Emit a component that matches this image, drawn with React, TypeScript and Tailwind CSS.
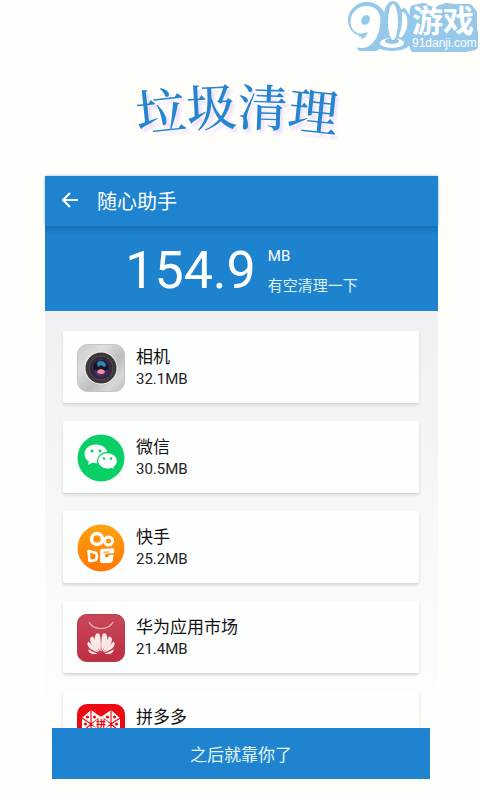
import type { ReactNode } from "react";

function BrandLogo() {
  return (
    <svg
      className="h-14 w-[136px]"
      viewBox="344 0 136 56"
      role="img"
      aria-label="91游戏 91danji.com"
    >
      <g fill="#96c8ea" stroke="#96c8ea" strokeWidth="8" strokeLinejoin="round">
        <path d="M414 9l10-2 4 3h10l8-3 8 1h15l4 5v16l1 4v13l-9 2h-51l-3-10z" />
        <ellipse cx="367" cy="20" rx="15" ry="14" />
        <path d="M370 30h12l-6 17h-15z" />
        <ellipse cx="393" cy="24" rx="6" ry="19" />
        <ellipse cx="392" cy="42" rx="14" ry="5" />
        <path d="M401 10q11 12 4 29" />
      </g>
      <text
        x="348"
        y="46"
        fill="#fff"
        stroke="#fff"
        strokeWidth="3"
        className="font-['Liberation_Sans',sans-serif] text-[56px] font-bold italic"
      >
        9
      </text>
      <ellipse cx="392" cy="43" rx="12" ry="5" fill="#fff" />
      <ellipse cx="392" cy="41" rx="7" ry="3" fill="#96c8ea" />
      <ellipse cx="393" cy="22" rx="6" ry="19" fill="#fff" stroke="#96c8ea" strokeWidth="2" />
      <path d="M402 12q3 0 5 5 2 12-5 20-3 2-3-2 4-8 3-23z" fill="#fff" />
      <text
        x="412"
        y="32"
        fill="#fff"
        className="font-['Noto_Sans_CJK_SC',sans-serif] text-[31px] font-bold"
      >
        游戏
      </text>
      <text
        x="412"
        y="47"
        fill="#fff"
        className="font-['Liberation_Sans',sans-serif] text-[12px]"
      >
        91danji.com
      </text>
    </svg>
  );
}

function CameraIcon() {
  return (
    <svg viewBox="0 0 48 48" className="size-12" aria-hidden="true">
      <defs>
        <linearGradient id="metal" x1="0" y1="0" x2="1" y2="1">
          <stop offset="0" stopColor="#c9c9c9" />
          <stop offset=".3" stopColor="#dedede" />
          <stop offset=".6" stopColor="#bdbdbd" />
          <stop offset=".8" stopColor="#d8d8d8" />
          <stop offset="1" stopColor="#bcbcbc" />
        </linearGradient>
        <radialGradient id="lens">
          <stop offset="0" stopColor="#17182c" />
          <stop offset=".6" stopColor="#251b33" />
          <stop offset="1" stopColor="#3a3439" />
        </radialGradient>
      </defs>
      <rect x=".5" y=".5" width="47" height="47" rx="10" fill="url(#metal)" stroke="#c4c4c4" />
      <circle cx="24" cy="24" r="16.500" fill="#eee" />
      <circle cx="24" cy="24" r="15.500" fill="#3b3639" />
      <circle cx="24" cy="24" r="12" fill="url(#lens)" stroke="#54465a" />
      <circle cx="24" cy="24" r="8.500" fill="#161427" stroke="#4b2f62" />
      <path d="M20 20q1-4 5-3 4 1 4 5l-2 1-3-2-3 2z" fill="#2d86ae" />
      <path d="M17 26l4 1 3-1 4 1 3-2q-1 7-7 7t-7-6z" fill="#4e2a78" />
      <path d="M21 26l3-1 3 1 1 2-2 2h-4l-2-2z" fill="#ee8c98" />
    </svg>
  );
}

function WeChatIcon() {
  return (
    <svg viewBox="0 0 48 48" className="size-12" aria-hidden="true">
      <circle cx="24" cy="24" r="23.500" fill="#09d066" />
      <path
        d="M19 10.500C12.500 10.500 7.500 14.500 7.500 20c0 3.200 1.700 5.900 4.400 7.600L11 31l4.200-2.200c1.200.3 2.500.5 3.800.5 6.500 0 11.500-4 11.500-9.300s-5-9.500-11.500-9.500z"
        fill="#fff"
      />
      <path
        d="M30.500 18.500c5.500 0 10 3.600 10 8.300 0 2.600-1.400 4.900-3.600 6.400l.8 3-3.500-1.700c-1.200.4-2.400.6-3.700.6-5.500 0-10-3.700-10-8.300s4.500-8.300 10-8.300z"
        fill="#fff"
        stroke="#09d066"
        strokeWidth="1.300"
      />
      <g fill="#09d066">
        <circle cx="15" cy="17" r="1.500" />
        <circle cx="23" cy="17" r="1.500" />
        <circle cx="27" cy="24.500" r="1.300" />
        <circle cx="34" cy="24.500" r="1.300" />
      </g>
    </svg>
  );
}

function KuaishouIcon() {
  return (
    <svg viewBox="0 0 48 48" className="size-12" aria-hidden="true">
      <defs>
        <linearGradient id="orange" x1="0" y1="0" x2="0" y2="1">
          <stop offset="0" stopColor="#ffa411" />
          <stop offset="1" stopColor="#ff7603" />
        </linearGradient>
      </defs>
      <circle cx="24" cy="24" r="23.500" fill="url(#orange)" />
      <g fill="none" stroke="#fff" strokeLinejoin="round">
        <circle cx="20" cy="15" r="5.500" strokeWidth="3.400" />
        <circle cx="31.500" cy="17" r="4" strokeWidth="3" />
        <path d="M11.500 27l7.500 2q2 3 0 7l-6.500 1z" strokeWidth="2.600" />
      </g>
      <path
        d="M23.500 25l12.500-.8q1.500 0 1.300 2l-.4 3-8.400.6-.4 3.500 3.400-.2.3-2 4.800-.3-.9 6q-.3 2-2.300 2.100l-8 .2q-2.600-.1-2.500-2.400z"
        fill="#fff"
      />
      <path d="M26.500 28.300l6-.4" stroke="#ff8a0a" strokeWidth="1" />
    </svg>
  );
}

function HuaweiPetals() {
  return (
    <>
      <path d="M23.500 37.500Q24.500 27 22.500 20q-1.500-1.500-3.500 0-2.500 4-.5 9 2 5 5 8.500z" />
      <path d="M22.500 38Q19 28 16 22.500q-2.500 0-3 3 0 4 3 7 3 3.500 6.500 5.500z" />
      <path d="M21.500 38.500Q16 31.500 11.500 27.500q-1.500 1-1 3.500 1 3 4 4.500 3 2 7 3z" />
      <path d="M20.500 39.500q-5-1.500-9.500-4.200.5 3.200 3 4.200 3 1 6.500 0z" />
    </>
  );
}

function HuaweiMarketIcon() {
  return (
    <svg viewBox="0 0 48 48" className="size-12" aria-hidden="true">
      <defs>
        <linearGradient id="crimson" x1="0" y1="0" x2="0" y2="1">
          <stop offset="0" stopColor="#c9465a" />
          <stop offset="1" stopColor="#bc2f41" />
        </linearGradient>
      </defs>
      <rect x=".5" y=".5" width="47" height="47" rx="9" fill="url(#crimson)" stroke="#b23a4b" />
      <path d="M12 8q3 6.500 12 6.500T36 8" fill="none" stroke="#e9b6bd" strokeWidth="1.200" />
      <g fill="#fae9e9">
        <HuaweiPetals />
        <g transform="matrix(-1 0 0 1 48 0)">
          <HuaweiPetals />
        </g>
      </g>
    </svg>
  );
}

function PinduoduoIcon() {
  return (
    <svg viewBox="0 0 48 48" className="size-12" aria-hidden="true">
      <rect width="48" height="48" rx="10" fill="#ee0a12" />
      <path d="M14 6l10 7 10-7 9 8v14L24 45 5 28V14z" fill="#fff" />
      <path
        d="M14 6v20M5 14l9 6 10-7M5 28l9-8 10 7M34 6v20M43 14l-9 6-10-7M43 28l-9-8-10 7"
        fill="none"
        stroke="#ee0a12"
        strokeWidth="1.200"
      />
      <g fill="#ee0a12">
        <circle cx="10.500" cy="13" r="1.600" />
        <circle cx="17.500" cy="13" r="1.600" />
        <circle cx="8.500" cy="20" r="1.600" />
        <circle cx="10.500" cy="27" r="1.600" />
        <circle cx="30.500" cy="13" r="1.600" />
        <circle cx="37.500" cy="13" r="1.600" />
        <circle cx="39.500" cy="20" r="1.600" />
        <circle cx="37.500" cy="27" r="1.600" />
      </g>
      <path d="M24 12l9 8-9 9-9-9z" fill="#fff" />
      <text
        x="24"
        y="24"
        textAnchor="middle"
        fill="#ee0a12"
        className="font-['Noto_Sans_CJK_SC',sans-serif] text-[10px] font-bold"
      >
        拼
      </text>
    </svg>
  );
}

type AppEntry = { name: string; size?: string; icon: ReactNode };

const apps: AppEntry[] = [
  { name: "相机", size: "32.1MB", icon: <CameraIcon /> },
  { name: "微信", size: "30.5MB", icon: <WeChatIcon /> },
  { name: "快手", size: "25.2MB", icon: <KuaishouIcon /> },
  { name: "华为应用市场", size: "21.4MB", icon: <HuaweiMarketIcon /> },
  { name: "拼多多", icon: <PinduoduoIcon /> },
];

export default function App() {
  return (
    <div className="flex h-screen flex-col bg-[#fffefb] pb-[21px] font-[Roboto,'Noto_Sans_CJK_SC',sans-serif]">
      <div className="flex justify-end">
        <BrandLogo />
      </div>

      <h1 className="flex h-[120px] justify-center pt-3 pr-[6px] font-['Noto_Serif_CJK_SC','Noto_Sans_CJK_SC',serif] text-[50px] leading-[72px] font-medium text-[#2585cf] [text-shadow:3px_4px_3px_#ecdffc]">
        <span className="mt-1 -rotate-6">垃</span>
        <span className="-rotate-3">圾</span>
        <span className="rotate-2">清</span>
        <span className="mt-1 rotate-6">理</span>
      </h1>

      <main className="mr-[42px] ml-[45px] flex min-h-0 flex-1 flex-col bg-linear-to-b from-[#ececf1] to-[#fefefd]">
        <header className="flex h-[50px] shrink-0 items-center gap-4 bg-[#1e84d0] pl-4 text-white shadow-[0_0_3px_#8fc0e6]">
          <button type="button" aria-label="返回" className="flex size-5 items-center justify-center">
            <svg viewBox="0 0 20 20" className="size-5" fill="none" stroke="#fff" strokeWidth="2">
              <path d="M17 9H2M9 2L2 9l7 7" />
            </svg>
          </button>
          <h2 className="pt-[2px] text-[20px] leading-7 font-normal">随心助手</h2>
        </header>

        <section className="flex h-[85px] shrink-0 items-center justify-center gap-3 bg-linear-to-b from-[#1971b6] to-[#1e83cf] to-10% pt-1 text-white">
          <span className="text-[52px] leading-[64px]">154.9</span>
          <div className="flex flex-col gap-[10px]">
            <span className="text-[15px] leading-5">MB</span>
            <span className="text-[15px] leading-5 text-[#dff1ee]">有空清理一下</span>
          </div>
        </section>

        <ul className="flex min-h-0 flex-1 flex-col gap-[18px] overflow-hidden pt-5 pr-[19px] pl-[18px]">
          {apps.map((app) => (
            <li
              key={app.name}
              className="flex h-[72px] shrink-0 items-center gap-[11px] rounded-xs bg-[#fdfefe] pt-[2px] pl-[14px] shadow-[0_2px_3px_#d3d5d7]"
            >
              {app.icon}
              <div className="flex h-12 flex-col pt-[2px] text-[#222]">
                <span className="text-[17px] leading-[22px] text-[#111]">{app.name}</span>
                {app.size && <span className="text-[15px] leading-[22px]">{app.size}</span>}
              </div>
            </li>
          ))}
        </ul>
      </main>

      <button
        type="button"
        className="mr-[50px] ml-[52px] h-[51px] shrink-0 bg-[#1f84cf] pt-1 text-[17px] text-[#e3f5f4]"
      >
        之后就靠你了
      </button>
    </div>
  );
}
